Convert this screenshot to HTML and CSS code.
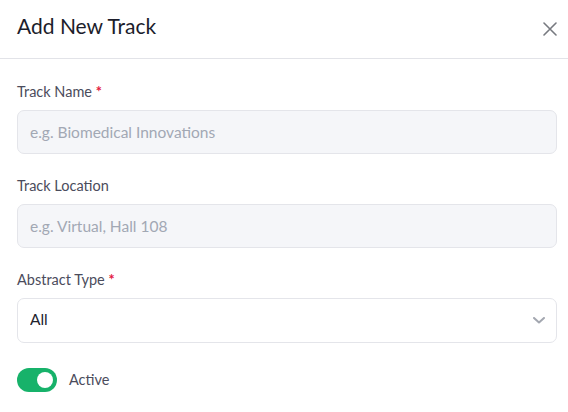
FILE: index.html
```html
<!DOCTYPE html>
<html lang="en">

<head>
    <meta charset="UTF-8">
    <meta name="viewport" content="width=device-width, initial-scale=1.0">
    <title>Add New Track</title>
    <link rel="stylesheet" href="styles.css">
</head>

<body>
    <div class="modal">
        <!-- Header -->
        <div class="modal-header">
            <h2>Add New Track</h2>
            <button class="close-btn" aria-label="Close">
                <svg width="14" height="14" viewBox="0 0 14 14">
                    <path d="M1 1 L13 13 M13 1 L1 13" stroke="#777a80" stroke-width="1.6" stroke-linecap="round" />
                </svg>
            </button>
        </div>

        <!-- Form -->
        <form class="modal-body">
            <div class="field">
                <label for="track-name">Track Name <span class="required">*</span></label>
                <input type="text" id="track-name" placeholder="e.g. Biomedical Innovations" />
            </div>

            <div class="field">
                <label for="track-location">Track Location</label>
                <input type="text" id="track-location" placeholder="e.g. Virtual, Hall 108" />
            </div>

            <div class="field">
                <label for="abstract-type">Abstract Type <span class="required">*</span></label>
                <div class="select-wrap">
                    <select id="abstract-type">
                        <option>All</option>
                    </select>
                    <svg class="chevron" width="12" height="7" viewBox="0 0 12 7">
                        <path d="M1 1 L6 5.5 L11 1" fill="none" stroke="#a3a7b0" stroke-width="2" stroke-linecap="round" stroke-linejoin="round" />
                    </svg>
                </div>
            </div>

            <label class="toggle-row">
                <span class="toggle"><span class="knob"></span></span>
                <span class="toggle-label">Active</span>
            </label>
        </form>
    </div>
</body>

</html>
```

FILE: styles.css
```css
body {
    font-family: 'Lato', 'Noto Sans', sans-serif;
    background-color: white;
    margin: 0;
    padding: 0;
}

.modal {
    width: 568px;
}

/* Header */
.modal-header {
    display: flex;
    justify-content: space-between;
    align-items: center;
    height: 58px;
    padding: 0 11px 0 17px;
    border-bottom: 1px solid #e2e3e8;
}

.modal-header h2 {
    margin: 0;
    font-size: 21px;
    font-weight: 400;
    color: #1c1d2b;
    padding-bottom: 7px;
}

.close-btn {
    background: none;
    border: none;
    padding: 0;
    width: 14px;
    height: 14px;
    cursor: pointer;
    display: flex;
}

/* Form */
.modal-body {
    padding: 23px 11px 0 17px;
}

.field {
    display: flex;
    flex-direction: column;
    margin-bottom: 22px;
}

.field label {
    font-size: 14.5px;
    line-height: 20px;
    color: #4b4c5c;
    margin-bottom: 8px;
}

.required {
    color: #e3173e;
    font-weight: 700;
}

.field input,
.field select {
    box-sizing: border-box;
    width: 100%;
    height: 44px;
    padding: 0 12px;
    font-family: inherit;
    font-size: 15.5px;
    border: 1px solid #e4e5ea;
    border-radius: 7px;
    outline: none;
}

.field input {
    background-color: #f5f6f9;
}

.field input::placeholder {
    color: #a2a8b4;
}

.select-wrap {
    position: relative;
}

.field select {
    appearance: none;
    background-color: white;
    color: #22232e;
    height: 45px;
    padding-bottom: 3px;
}

.chevron {
    position: absolute;
    right: 12px;
    top: 19px;
    pointer-events: none;
}

/* Toggle */
.toggle-row {
    display: flex;
    align-items: center;
    gap: 12px;
    margin-top: 25px;
}

.toggle {
    display: flex;
    align-items: center;
    justify-content: flex-end;
    box-sizing: border-box;
    width: 40px;
    height: 24px;
    padding: 0 4px;
    border-radius: 12px;
    background-color: #17b26a;
}

.knob {
    width: 16px;
    height: 16px;
    border-radius: 50%;
    background-color: white;
}

.toggle-label {
    font-size: 14.5px;
    color: #4b4c5c;
    padding-bottom: 2px;
}
```
